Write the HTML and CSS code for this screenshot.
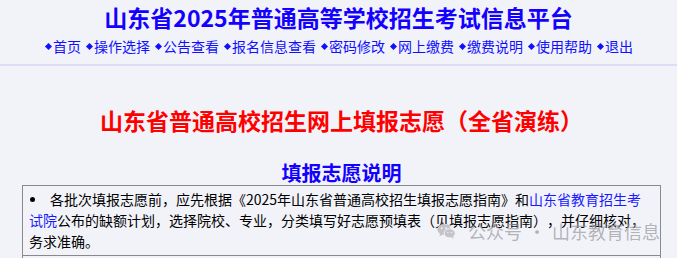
FILE: index.html
```html
<!DOCTYPE html>
<html lang="zh-CN">
<head>
<meta charset="utf-8">
<title>山东省2025年普通高等学校招生考试信息平台</title>
<link rel="stylesheet" href="styles.css">
</head>
<body>
<header class="top">
  <h1 class="site-title">山东省2025年普通高等学校招生考试信息平台</h1>
  <nav class="nav">
    <a href="#"><i class="dot"></i>首页</a>
    <a href="#"><i class="dot"></i>操作选择</a>
    <a href="#"><i class="dot"></i>公告查看</a>
    <a href="#"><i class="dot"></i>报名信息查看</a>
    <a href="#"><i class="dot"></i>密码修改</a>
    <a href="#"><i class="dot"></i>网上缴费</a>
    <a href="#"><i class="dot"></i>缴费说明</a>
    <a href="#"><i class="dot"></i>使用帮助</a>
    <a href="#"><i class="dot"></i>退出</a>
  </nav>
</header>
<main class="main">
  <h2 class="page-title">山东省普通高校招生网上填报志愿（全省演练）</h2>
  <h3 class="sub-title">填报志愿说明</h3>
  <div class="box">
    <div class="row">
      <p class="item"><span class="bullet"></span>各批次填报志愿前，应先根据《2025年山东省普通高校招生填报志愿指南》和<a href="#">山东省教育招生考试院</a>公布的缺额计划，选择院校、专业，分类填写好志愿预填表（见填报志愿指南），并仔细核对，务求准确。</p>
    </div>
    <div class="row"></div>
  </div>
</main>
<div class="watermark">
  <svg class="wm-icon" width="19" height="16" viewBox="0 0 24 20">
    <ellipse cx="9" cy="8" rx="8.5" ry="7" fill="#c4c4c8"/>
    <path d="M4 13 L3 17 L7.5 14.5 Z" fill="#c4c4c8"/>
    <ellipse cx="16" cy="13" rx="7" ry="5.8" fill="#c4c4c8" stroke="#f2f3f9" stroke-width="1.2"/>
    <path d="M20 17 L21.5 19.5 L17.5 18 Z" fill="#c4c4c8"/>
    <circle cx="6" cy="6.5" r="1.1" fill="#f2f3f9"/>
    <circle cx="11.5" cy="6.5" r="1.1" fill="#f2f3f9"/>
    <circle cx="13.8" cy="12" r="0.9" fill="#f2f3f9"/>
    <circle cx="18.3" cy="12" r="0.9" fill="#f2f3f9"/>
  </svg>
  <span class="wm-text">公众号<span class="wm-dot">·</span>山东教育信息</span>
</div>
</body>
</html>
```
FILE: styles.css
```css
html, body {
  margin: 0;
  padding: 0;
}
body {
  background: #f2f3f9;
  font-family: "Noto Sans CJK SC", "Noto Sans", sans-serif;
  color: #000;
  position: relative;
  height: 258px;
  overflow: hidden;
  text-spacing-trim: space-all;
}
.top {
  border-bottom: 2px solid #dcdcf6;
  height: 66px;
  box-sizing: border-box;
  padding-top: 2px;
  text-align: center;
}
.site-title {
  margin: 0;
  font-size: 23px;
  line-height: 30px;
  font-weight: bold;
  color: #1400ff;
}
.nav {
  margin-top: 5px;
  display: flex;
  justify-content: center;
  gap: 4px;
  font-size: 14px;
  line-height: 18px;
}
.nav a {
  color: #1010ff;
  text-decoration: none;
  display: inline-flex;
  align-items: center;
}
.dot {
  display: inline-block;
  width: 5px;
  height: 5px;
  background: #1010ff;
  transform: rotate(45deg);
  margin: 0 2px 0 2px;
}
.main {
  padding: 0 16px 0 22px;
}
.page-title {
  margin: 38px 0 0;
  text-align: center;
  font-size: 23px;
  line-height: 32px;
  font-weight: bold;
  color: #ff0000;
}
.sub-title {
  margin: 26px 0 1px;
  text-align: center;
  font-size: 20px;
  line-height: 22px;
  font-weight: bold;
  color: #1400ff;
}
.box {
  border: 1px solid #8a8a8a;
  border-bottom: none;
}
.row + .row {
  border-top: 1px solid #8a8a8a;
  height: 20px;
}
.item {
  margin: 0;
  padding: 3px 10px 3px 6px;
  font-size: 14px;
  line-height: 21px;
}
.bullet {
  display: inline-block;
  width: 5px;
  height: 5px;
  border-radius: 50%;
  background: #000;
  margin: 0 15px 0 1px;
  vertical-align: 3px;
}
.item a {
  color: #1a1aff;
  text-decoration: none;
}
.watermark {
  position: absolute;
  left: 437px;
  top: 219px;
  display: flex;
  align-items: center;
  gap: 12px;
  white-space: nowrap;
  pointer-events: none;
}
.wm-text {
  font-size: 18px;
  line-height: 24px;
  color: rgba(150, 150, 155, 0.7);
}
.wm-dot {
  margin: 0 6px;
}
```
